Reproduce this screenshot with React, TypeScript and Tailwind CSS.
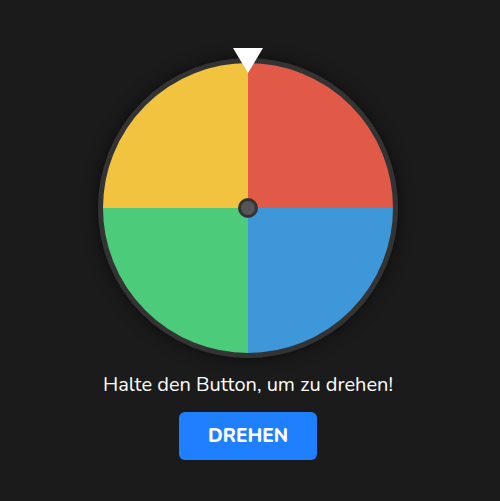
export default function App() {
  return (
    <div className="flex min-h-[501px] w-full flex-col items-center bg-[#1b1b1b] pr-1 pt-[58px] font-['Nunito','Lato',sans-serif]">
      <div className="relative h-[300px] w-[300px]">
        {/* pointer */}
        <div className="absolute left-1/2 top-[-10px] z-10 h-0 w-0 -translate-x-1/2 border-x-[15px] border-t-[25px] border-x-transparent border-t-white" />
        <div className="h-full w-full rounded-full border-[5px] border-[#333333] bg-[conic-gradient(#e05a47_0_25%,#3d97d8_0_50%,#4ccb7a_0_75%,#f1c33f_0)] shadow-[0_0_15px_rgba(0,0,0,0.6)]" />
        <div className="absolute left-1/2 top-1/2 h-[20px] w-[20px] -translate-x-1/2 -translate-y-1/2 rounded-full border-[3px] border-[#333333] bg-[#555555]" />
      </div>
      <p className="mt-[13px] text-[20px] leading-[28px] text-white">Halte den Button, um zu drehen!</p>
      <button className="mt-[13px] h-[48px] w-[138px] rounded-md bg-[#1e80ff] text-[19px] font-extrabold text-white">
        DREHEN
      </button>
    </div>
  );
}
